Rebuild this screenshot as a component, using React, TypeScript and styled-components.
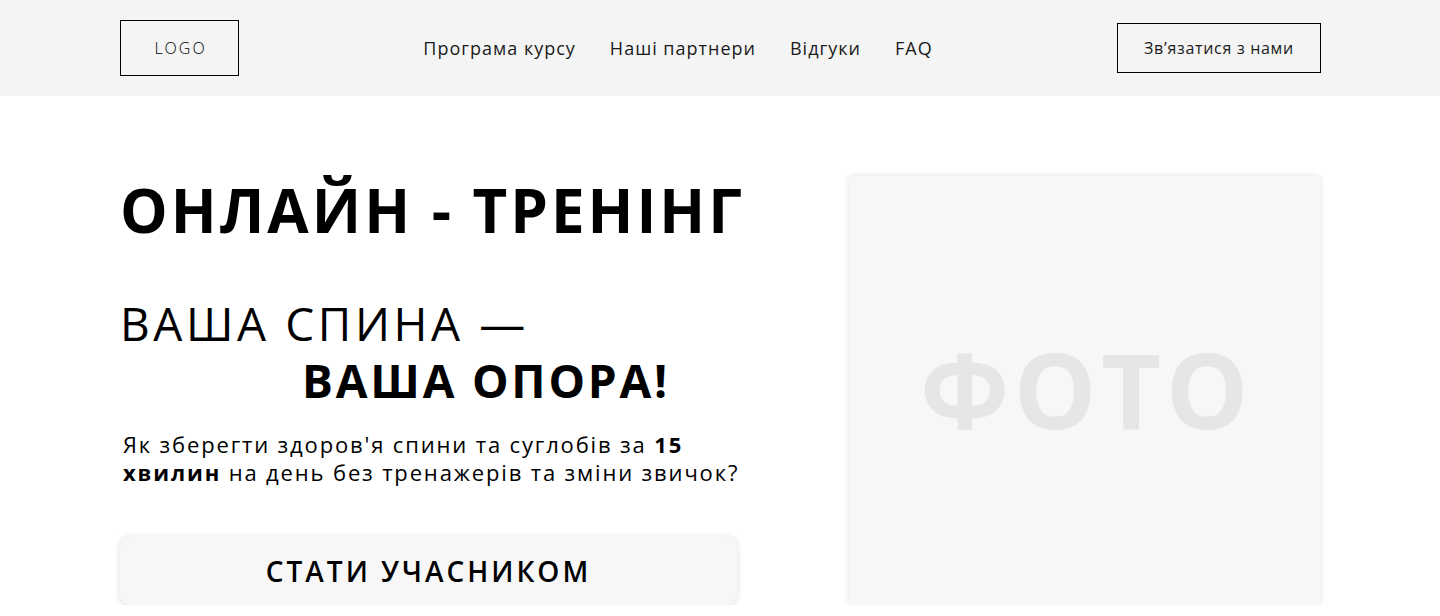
import { createGlobalStyle, styled } from "styled-components";

const GlobalStyle = createGlobalStyle`
  * {
    box-sizing: border-box;
  }

  body {
    margin: 0;
    background: #ffffff;
    color: #000000;
    font-family: "Open Sans", "Liberation Sans", sans-serif;
  }
`;

const navLinks = ["Програма курсу", "Наші партнери", "Відгуки", "FAQ"];

export default function App() {
  return (
    <>
      <GlobalStyle />
      <Header>
        <Logo>LOGO</Logo>
        <Nav>
          {navLinks.map((link) => (
            <NavLink key={link} href="#">
              {link}
            </NavLink>
          ))}
        </Nav>
        <ContactButton>Зв’язатися з нами</ContactButton>
      </Header>

      <Hero>
        <HeroText>
          <Title>ОНЛАЙН - ТРЕНІНГ</Title>
          <Slogan>
            <SloganLine $spacing={3.6}>ВАША СПИНА —</SloganLine>
            <SloganLine $bold $indent={182} $spacing={2.8}>
              ВАША ОПОРА!
            </SloganLine>
          </Slogan>
          <Lead>
            Як зберегти здоров'я спини та суглобів за <b>15</b> <b>хвилин</b>{" "}
            на день без тренажерів та зміни звичок?
          </Lead>
          <JoinButton>СТАТИ УЧАСНИКОМ</JoinButton>
        </HeroText>
        <Photo>ФОТО</Photo>
      </Hero>
    </>
  );
}

const Header = styled.header`
  height: 96px;
  padding: 0 119px 0 120px;
  background: #f4f4f4;
  display: flex;
  align-items: center;
  justify-content: space-between;
`;

const Logo = styled.div`
  width: 119px;
  height: 56px;
  border: 1px solid #000;
  display: flex;
  align-items: center;
  justify-content: center;
  font-size: 16px;
  font-weight: 300;
  letter-spacing: 2px;
  padding-left: 2px;
`;

const Nav = styled.nav`
  display: flex;
  gap: 34px;
`;

const NavLink = styled.a`
  font-size: 18px;
  color: #1a1a1a;
  text-decoration: none;
  letter-spacing: 1px;
`;

const ContactButton = styled.button`
  width: 204px;
  height: 50px;
  border: 1px solid #000;
  background: transparent;
  font-family: inherit;
  font-size: 16px;
  color: #1a1a1a;
  letter-spacing: 0.7px;
  cursor: pointer;
`;

const Hero = styled.main`
  padding: 84px 120px 0;
  display: flex;
  justify-content: space-between;
  align-items: flex-start;
`;

const HeroText = styled.div`
  width: 617px;
  display: flex;
  flex-direction: column;
  align-items: flex-start;
`;

const Title = styled.h1`
  margin: 0;
  font-size: 60px;
  line-height: 60px;
  font-weight: 700;
  letter-spacing: 3px;
  white-space: nowrap;
`;

const Slogan = styled.div`
  margin-top: 55px;
`;

const SloganLine = styled.div<{
  $bold?: boolean;
  $indent?: number;
  $spacing: number;
}>`
  font-size: 46px;
  line-height: 57px;
  font-weight: ${(p) => (p.$bold ? 700 : 400)};
  padding-left: ${(p) => p.$indent ?? 0}px;
  letter-spacing: ${(p) => p.$spacing}px;
  white-space: nowrap;
`;

const Lead = styled.p`
  width: 622px;
  margin: 21px 0 0 3px;
  font-size: 22px;
  line-height: 28px;
  letter-spacing: 1.85px;

  b {
    font-weight: 700;
  }
`;

const JoinButton = styled.button`
  margin-top: 50px;
  width: 617px;
  height: 69px;
  border: none;
  border-radius: 10px;
  background: #f7f7f7;
  box-shadow: 0 1px 6px rgba(0, 0, 0, 0.14);
  font-family: inherit;
  font-size: 28px;
  font-weight: 600;
  color: #000;
  letter-spacing: 3px;
  cursor: pointer;
`;

const Photo = styled.div`
  width: 471px;
  height: 429px;
  margin-top: -4px;
  background: #f7f7f7;
  box-shadow: 0 0 6px rgba(0, 0, 0, 0.12);
  display: flex;
  align-items: center;
  justify-content: center;
  padding-bottom: 4px;
  padding-left: 4px;
  font-size: 104px;
  font-weight: 700;
  color: #e6e6e6;
  letter-spacing: 4.5px;
`;
